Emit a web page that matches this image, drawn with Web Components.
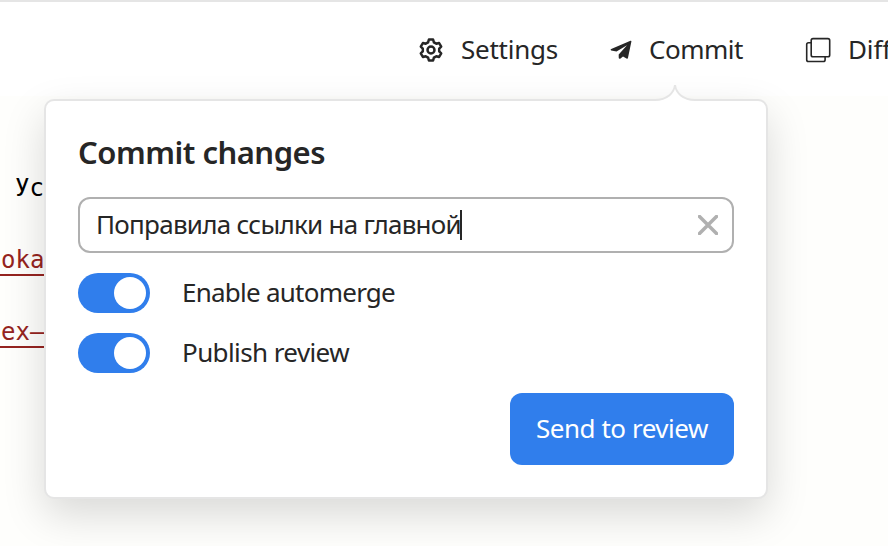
<!DOCTYPE html>
<html lang="en"><head><meta charset="utf-8"><title>Commit changes</title>
<style>
html,body{margin:0;height:100%;overflow:hidden}
body{font:26px/32px "Noto Sans","Open Sans",sans-serif;color:#262626;background:#fefefc}
</style></head><body>
<commit-page></commit-page>
<script>
// Text run whose tracking is adjusted so that it spans the given advance width.
class FitText extends HTMLElement{
  connectedCallback(){
    const r=this.attachShadow({mode:'open'});
    r.innerHTML=`<style>:host{display:block;white-space:pre;flex:none;padding-bottom:2px}span{display:inline-block}</style><span></span>`;
    const s=r.querySelector('span'),t=this.getAttribute('text');
    s.textContent=t;
    s.style.letterSpacing=((+this.getAttribute('span')-s.getBoundingClientRect().width)/t.length)+'px';
  }
}
customElements.define('fit-text',FitText);

function define(name,html){
  customElements.define(name,class extends HTMLElement{
    constructor(){super();this.attachShadow({mode:'open'}).innerHTML=html}
  });
}
define('nav-item',`<style>:host{display:flex;align-items:center;flex:none}
.icon{display:flex;width:var(--icon-width,26px);margin-right:var(--icon-gap,17px)}</style>
<div class="icon"><slot name="icon"></slot></div><slot></slot>`);
define('toggle-row',`<style>:host{display:flex;align-items:center;height:40px;gap:32px;flex:none}
.track{box-sizing:border-box;width:72px;height:40px;border-radius:20px;background:#307eec;padding:4px;display:flex;justify-content:flex-end}
.knob{width:32px;height:32px;border-radius:50%;background:#fff}</style>
<div class="track"><div class="knob"></div></div><slot></slot>`);
define('text-field',`<style>:host{box-sizing:border-box;display:flex;align-items:center;height:56px;flex:none;border:2px solid #b0b0b0;border-radius:12px;padding:0 14px 0 16px}
.caret{width:2px;height:30px;background:#262626;margin-left:-1px}svg{margin-left:auto}</style>
<slot></slot><div class="caret"></div>
<svg width="20" height="20" viewBox="0 0 20 20" fill="none" stroke="#b0b0b0" stroke-width="3.500" stroke-linecap="round"><path d="M1.5 1.5l17 17M18.5 1.5l-17 17"/></svg>`);
define('action-button',`<style>:host{display:flex;align-items:center;justify-content:center;width:224px;height:72px;flex:none;border-radius:12px;background:#307eec;color:#fff}</style><slot></slot>`);
define('commit-popup',`<style>
:host{box-sizing:border-box;display:flex;flex-direction:column;position:absolute;left:44px;top:99px;width:724px;height:400px;background:#fff;border:2px solid #e5e5e5;border-radius:10px;padding:32px;box-shadow:0 16px 42px rgba(0,0,0,.15)}
.tip{position:absolute;left:609px;top:-17px}
h1{font-size:31px;line-height:40px;font-weight:600;margin:-1px 0 23px}
toggle-row{margin-top:20px}action-button{margin:20px 0 0 auto}</style>
<svg class="tip" width="40" height="18" viewBox="0 0 40 18"><path d="M0 19V16C12 16 19 9 20 1C21 9 28 16 40 16V19Z" fill="#fff"/><path d="M0 16C12 16 19 9 20 1C21 9 28 16 40 16" fill="none" stroke="#e5e5e5" stroke-width="2"/></svg>
<h1><fit-text text="Commit changes" span="247"></fit-text></h1>
<text-field><fit-text text="Поправила ссылки на главной" span="365"></fit-text></text-field>
<toggle-row><fit-text text="Enable automerge" span="213"></fit-text></toggle-row>
<toggle-row><fit-text text="Publish review" span="167"></fit-text></toggle-row>
<action-button><fit-text text="Send to review" span="172"></fit-text></action-button>`);
define('top-nav',`<style>:host{box-sizing:border-box;display:flex;height:96px;border-top:2px solid #e5e5e5;background:#fff;padding:0 0 0 418px;align-items:center}
nav-item{margin-top:2px;height:32px}svg{display:block}
.b{--icon-gap:15px;margin-left:50px}.c{--icon-gap:17px;margin-left:62px}</style>
<nav-item><svg slot="icon" width="26" height="26" viewBox="0 0 26 26" fill="none" stroke="#262626" stroke-width="2.500" stroke-linejoin="round"><path d="M10.900 2.500H15.100L15.900 5.300L18.300 6.700L21.100 6L23.200 9.700L21.200 11.700V14.300L23.200 16.300L21.100 20L18.300 19.300L15.900 20.700L15.100 23.500H10.900L10.100 20.700L7.700 19.300L4.900 20L2.800 16.300L4.800 14.300V11.700L2.800 9.700L4.900 6L7.700 6.700L10.100 5.300Z"/><circle cx="13" cy="13" r="3.500"/></svg><fit-text text="Settings" span="97"></fit-text></nav-item>
<nav-item class="b"><svg slot="icon" width="26" height="26" viewBox="0 0 26 26" fill="#262626"><path d="M22.500 3.800Q23.500 3.500 23.400 4.600L20 20.800Q19.700 22.300 18.500 21.500L15 19.500L12.200 21.700Q10.700 22 10.700 20.500V17.500L19 8.200L8.500 14.500L3.200 13.400Q1.800 12.700 3.200 12Z"/></svg><fit-text text="Commit" span="94"></fit-text></nav-item>
<nav-item class="c"><svg slot="icon" width="26" height="26" viewBox="0 0 26 26" fill="none" stroke="#262626" stroke-width="1.600"><rect x="6.200" y="1.600" width="18.500" height="18.200" rx="1.800"/><path d="M6.200 5.800H3.500Q1.700 5.800 1.700 7.600V22.700Q1.700 24.500 3.500 24.500H18.300Q20.100 24.500 20.100 22.700V19.800"/></svg><fit-text text="Diff" span="43"></fit-text></nav-item>`);
define('code-pane',`<style>:host{display:flex;flex-direction:column;width:46px;overflow:hidden;font:24px/36px "DejaVu Sans Mono",monospace;padding-top:73px;gap:36px;color:#952420}
div{height:36px;white-space:pre;box-sizing:border-box}
.plain{color:#000;padding-left:15px;margin-top:-1px;line-height:40px}
.link{border-bottom:2px solid #952420;padding-left:1px;line-height:41px}</style>
<div class="plain">Ус</div><div class="link">oka</div><div class="link">ex–</div>`);
define('commit-page',`<style>:host{display:block;position:relative;height:546px;overflow:hidden}</style>
<top-nav></top-nav><code-pane></code-pane><commit-popup></commit-popup>`);
</script></body></html>
